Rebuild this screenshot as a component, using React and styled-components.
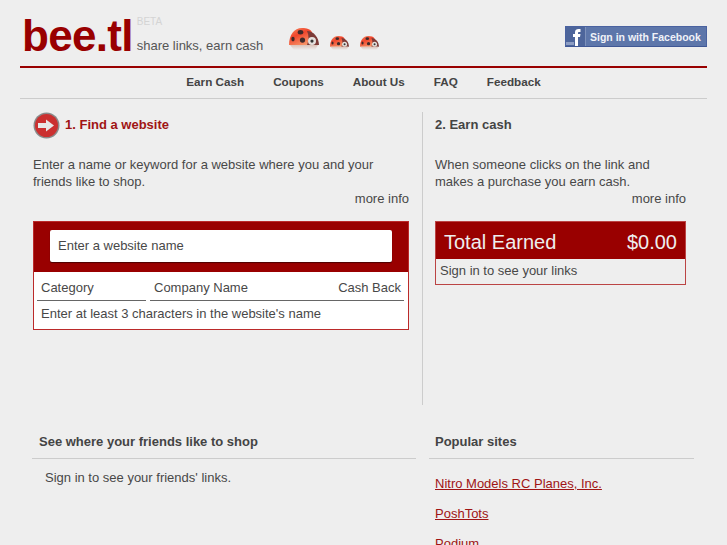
import React from 'react';
import styled, { createGlobalStyle } from 'styled-components';

const GlobalStyle = createGlobalStyle`
  html, body {
    margin: 0;
    height: 545px;
    overflow: hidden;
    background: #eeeeee;
  }
  body {
    font-family: "Liberation Sans", Arial, sans-serif;
    font-size: 13px;
    color: #484848;
  }
`

const Page = styled.div`
  width: 727px;
  height: 545px;
  overflow: hidden;
`

const Header = styled.header`
  margin: 0 20px;
  height: 66px;
  display: flex;
  border-bottom: 2px solid #990000;
`

const Logo = styled.div`
  font-size: 44px;
  font-weight: bold;
  letter-spacing: -0.7px;
  color: #990000;
  line-height: 50px;
  margin: 11px 0 0 2px;
`

const Tagline = styled.div`
  margin-left: 4px;
  width: 152px;
`

const Beta = styled.div`
  font-size: 10px;
  color: #d4d4d4;
  margin-top: 16px;
  line-height: 12px;
`

const Slogan = styled.div`
  margin-top: 9px;
  line-height: 18px;
  color: #555;
`

const Bugs = styled.div`
  display: flex;
  align-items: flex-end;
  gap: 11px;
  height: 35px;
  margin-top: 15px;
`

const Facebook = styled.a`
  margin: 26px 0 0 auto;
  width: 142px;
  height: 21px;
  display: flex;
  background: #5d76aa;
  border: 1px solid #4a62a0;
  border-bottom-color: #3f5795;
  box-sizing: border-box;
  color: #f0f2f8;
  font-size: 10.5px;
  font-weight: bold;
  line-height: 20px;
  white-space: nowrap;
`

const FbMark = styled.span`
  width: 19px;
  height: 19px;
  border-right: 1px solid #7d91bb;
  margin-right: 4px;
  display: block;
`

const Nav = styled.nav`
  margin: 0 20px;
  height: 31px;
  padding-bottom: 3px;
  box-sizing: border-box;
  border-bottom: 1px solid #cccccc;
  display: flex;
  justify-content: center;
  align-items: center;
  gap: 29px;
  font-weight: bold;
  font-size: 11.7px;
  color: #444;
`

const Columns = styled.div`
  display: flex;
  margin: 13px 0 0 33px;
  height: 293px;
`

const Column = styled.section`
  width: ${p => p.$width}px;
  box-sizing: border-box;
  border-right: ${p => (p.$divided ? '1px solid #cccccc' : '0')};
  padding-right: ${p => (p.$divided ? '13px' : '0')};
  margin-right: 12px;
`

const StepHead = styled.div`
  display: flex;
  align-items: center;
  gap: 5px;
  height: 27px;
  font-weight: bold;
  color: ${p => (p.$active ? '#a01414' : '#444')};
`

const StepTitle = styled.span`
  padding-bottom: 3px;
`

const Copy = styled.p`
  margin: 17px 0 0;
  line-height: 17px;
`

const MoreInfo = styled.div`
  text-align: right;
  line-height: 17px;
`

const SearchPanel = styled.div`
  margin-top: 14px;
  border: 1px solid #bb2a2a;
  background: #fff;
`

const SearchBar = styled.div`
  background: #990000;
  padding: 8px 16px 10px;
`

const SearchInput = styled.div`
  height: 32px;
  line-height: 31px;
  padding-left: 8px;
  background: #fff;
  border-radius: 2px;
  box-shadow: 0 1px 1px rgba(0, 0, 0, 0.5);
`

const ResultHead = styled.div`
  display: grid;
  grid-template-columns: 109px 254px;
  gap: 4px;
  padding: 0 3px;
`

const HeadCell = styled.div`
  display: flex;
  justify-content: space-between;
  height: 28px;
  line-height: 32px;
  padding: 0 3px 0 4px;
  border-bottom: 1px solid #666;
`

const ResultNote = styled.div`
  padding: 0 7px;
  height: 28px;
  line-height: 25px;
`

const EarnedPanel = styled.div`
  margin-top: 14px;
  border: 1px solid #bb4444;
`

const EarnedBar = styled.div`
  display: flex;
  justify-content: space-between;
  background: #990000;
  color: #eee;
  font-size: 20px;
  height: 37px;
  line-height: 41px;
  padding: 0 8px;
`

const EarnedNote = styled.div`
  padding-left: 4px;
  height: 25px;
  line-height: 24px;
`

const Lower = styled.div`
  display: flex;
  margin-left: 32px;
  gap: 13px;
`

const LowerBlock = styled.section`
  width: ${p => p.$width}px;
`

const LowerTitle = styled.h3`
  margin: 0;
  font-size: 13px;
  font-weight: bold;
  line-height: 17px;
  padding: 28px 0 8px ${p => p.$inset}px;
  border-bottom: 1px solid #cccccc;
  color: #444;
`

const FriendsNote = styled.div`
  padding-left: 13px;
  margin-top: 10px;
  line-height: 17px;
`

const Sites = styled.ul`
  list-style: none;
  margin: 16px 0 0;
  padding: 0 0 0 6px;
`

const Site = styled.li`
  height: 30px;
  line-height: 17px;
  a {
    color: #a01414;
    text-decoration: underline;
  }
`

const Ladybug = ({ width }) => (
  <svg width={width} height={width * 0.74} viewBox="0 0 30 22">
    <defs>
      <linearGradient id="shell" x1="0" y1="0" x2="0.6" y2="1">
        <stop offset="0" stopColor="#f58a62" />
        <stop offset="0.45" stopColor="#f0452c" />
        <stop offset="1" stopColor="#f79468" />
      </linearGradient>
      <linearGradient id="shine" x1="0" y1="0" x2="0" y2="1">
        <stop offset="0" stopColor="#dcc4ba" />
        <stop offset="1" stopColor="#eeeeee" />
      </linearGradient>
    </defs>
    <path d="M0 17 C0 7 5 0 13 0 C18 0 21 1 23 4 L24 17 Z" fill="url(#shell)" />
    <path d="M18 3 C25 3 30 10 30 17 L18 17 C20 12 20 7 18 3 Z" fill="#7c3a36" />
    <ellipse cx="11.5" cy="4.2" rx="2.8" ry="2.2" fill="#3f2a2a" />
    <ellipse cx="4" cy="11" rx="1.7" ry="2.4" fill="#3f2a2a" />
    <ellipse cx="13.5" cy="12" rx="2.6" ry="2.6" fill="#3f2a2a" />
    <circle cx="23" cy="13" r="4" fill="#e4e0dc" />
    <circle cx="23" cy="13" r="1.6" fill="#333" />
    <path d="M1 17 H29 L26 22 H5 Z" fill="url(#shine)" />
  </svg>
)

const StepIcon = () => (
  <svg width="27" height="27" viewBox="0 0 27 27">
    <circle cx="13.5" cy="13.5" r="13" fill="#8a8a8a" />
    <circle cx="13.5" cy="13.5" r="11.5" fill="#cb3030" />
    <path d="M5 11 H13 V7.5 L21 13.5 L13 19.5 V16 H5 Z" fill="#e8e8e8" />
  </svg>
)

const FbIcon = () => (
  <svg width="19" height="19" viewBox="0 0 19 19">
    <rect width="19" height="19" fill="#4d659b" />
    <rect y="15" width="8" height="3" fill="#8c9dc3" />
    <path d="M9 19 V10 H7 V7 H9 V5 C9 3 10.5 2 12.5 2 H14.5 V5 H13 C12.4 5 12 5.3 12 6 V7 H14.5 L14 10 H12 V19 Z" fill="#fff" />
  </svg>
)

const navItems = ['Earn Cash', 'Coupons', 'About Us', 'FAQ', 'Feedback']
const sites = ['Nitro Models RC Planes, Inc.', 'PoshTots', 'Podium']

export default function App() {
  return (
    <Page>
      <GlobalStyle />
      <Header>
        <Logo>bee.tl</Logo>
        <Tagline>
          <Beta>BETA</Beta>
          <Slogan>share links, earn cash</Slogan>
        </Tagline>
        <Bugs>
          <Ladybug width={30} />
          <Ladybug width={19} />
          <Ladybug width={19} />
        </Bugs>
        <Facebook>
          <FbMark><FbIcon /></FbMark>
          Sign in with Facebook
        </Facebook>
      </Header>
      <Nav>
        {navItems.map(item => <span key={item}>{item}</span>)}
      </Nav>
      <Columns>
        <Column $width={390} $divided>
          <StepHead $active>
            <StepIcon />
            <StepTitle>1. Find a website</StepTitle>
          </StepHead>
          <Copy>Enter a name or keyword for a website where you and your friends like to shop.</Copy>
          <MoreInfo>more info</MoreInfo>
          <SearchPanel>
            <SearchBar>
              <SearchInput>Enter a website name</SearchInput>
            </SearchBar>
            <ResultHead>
              <HeadCell>Category</HeadCell>
              <HeadCell>
                <span>Company Name</span>
                <span>Cash Back</span>
              </HeadCell>
            </ResultHead>
            <ResultNote>Enter at least 3 characters in the website's name</ResultNote>
          </SearchPanel>
        </Column>
        <Column $width={251}>
          <StepHead><StepTitle>2. Earn cash</StepTitle></StepHead>
          <Copy>When someone clicks on the link and makes a purchase you earn cash.</Copy>
          <MoreInfo>more info</MoreInfo>
          <EarnedPanel>
            <EarnedBar>
              <span>Total Earned</span>
              <span>$0.00</span>
            </EarnedBar>
            <EarnedNote>Sign in to see your links</EarnedNote>
          </EarnedPanel>
        </Column>
      </Columns>
      <Lower>
        <LowerBlock $width={384}>
          <LowerTitle $inset={7}>See where your friends like to shop</LowerTitle>
          <FriendsNote>Sign in to see your friends' links.</FriendsNote>
        </LowerBlock>
        <LowerBlock $width={265}>
          <LowerTitle $inset={6}>Popular sites</LowerTitle>
          <Sites>
            {sites.map(site => (
              <Site key={site}><a href="#">{site}</a></Site>
            ))}
          </Sites>
        </LowerBlock>
      </Lower>
    </Page>
  )
}
